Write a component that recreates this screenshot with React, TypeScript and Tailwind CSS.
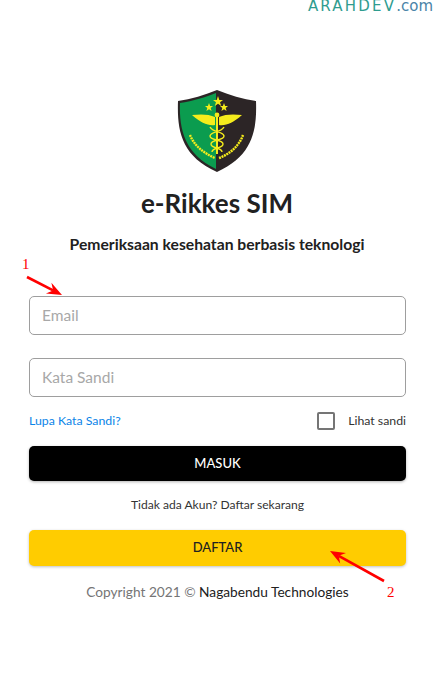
import React from 'react';

const font = { fontFamily: 'Lato, "Noto Sans", sans-serif' };

const Logo = () => (
  <svg width="80" height="82" viewBox="0 0 80 82" className="block">
    <path d="M1 11 C14 9 28 5 40 0 C52 5 66 9 79 11 C80 40 76 66 40 82 C4 66 0 40 1 11 Z" fill="#2c2526" />
    <path d="M3 13 C16 11 29 7 39 3 L39 79 C8 64 2 40 3 13 Z" fill="#0b9c4f" />
    <polygon points="41,6 42.3,10 46,10 43,12.3 44.2,16 41,13.7 37.8,16 39,12.3 36,10 39.7,10" fill="#f5ec1c" />
    <polygon points="32,13 33.1,16 36,16 33.7,18 34.6,21 32,19.2 29.4,21 30.3,18 28,16 30.9,16" fill="#f5ec1c" />
    <polygon points="47,13 48.1,16 51,16 48.7,18 49.6,21 47,19.2 44.4,21 45.3,18 43,16 45.9,16" fill="#f5ec1c" />
    <path d="M15 25 C23 24 32 24 38 27 L38 35 C31 36 24 33 15 25 Z" fill="#f5ec1c" />
    <path d="M65 25 C57 24 48 24 42 27 L42 35 C49 36 56 33 65 25 Z" fill="#f5ec1c" />
    <circle cx="40" cy="25" r="2.4" fill="#f5ec1c" />
    <rect x="39" y="26" width="2" height="38" fill="#f5ec1c" />
    <path d="M33 37 C36 43 46 41 47 46 C47 51 34 49 34 54 C34 59 45 57 45 62 M47 37 C44 43 34 41 33 46 C33 51 46 49 46 54 C46 59 35 57 35 62" fill="none" stroke="#f5ec1c" strokeWidth="1.4" />
    <path d="M13 45 C17 55 26 63 38 68" fill="none" stroke="#f5ec1c" strokeWidth="2.4" strokeDasharray="2 0.7" />
    <path d="M42 68 C53 64 62 56 66 45" fill="none" stroke="#f5ec1c" strokeWidth="2.4" strokeDasharray="2 0.7" />
  </svg>
);

const Arrow = ({ x1, y1, x2, y2 }: { x1: number; y1: number; x2: number; y2: number }) => {
  const a = Math.atan2(y2 - y1, x2 - x1);
  const p = (d: number, o: number) =>
    `${x2 - d * Math.cos(a) - o * Math.sin(a)},${y2 - d * Math.sin(a) + o * Math.cos(a)}`;
  return (
    <>
      <line x1={x1} y1={y1} x2={x2 - 10 * Math.cos(a)} y2={y2 - 10 * Math.sin(a)} stroke="#f00" strokeWidth="2.6" />
      <polygon points={`${x2},${y2} ${p(15, 6)} ${p(10, 0)} ${p(15, -6)}`} fill="#f00" />
    </>
  );
};

export default function App() {
  return (
    <div className="relative w-[434px] h-[699px] bg-white overflow-hidden" style={font}>
      <div
        className="flex justify-end pr-[1px] h-[14px] leading-[13px] text-[15px] tracking-[2.2px] text-[#2f9c8f] whitespace-nowrap"
        style={{ fontFamily: '"DejaVu Sans", sans-serif' }}
      >
        ARAHDEV<span className="text-[#4a84a8] tracking-[0px]">.com</span>
      </div>

      <div className="flex flex-col items-center pt-[76px]">
        <Logo />
        <h1 className="mt-[13px] text-[26px] leading-[36px] font-bold text-[#212121]">e-Rikkes SIM</h1>
        <p className="mt-[13px] text-[15.7px] leading-[20px] font-bold text-[#212121]">Pemeriksaan kesehatan berbasis teknologi</p>
      </div>

      <form className="px-[29px] w-[435px] mt-[42px]">
        <input
          placeholder="Email"
          className="block w-full h-[39px] px-[12px] pb-[2px] rounded-[5px] border border-[#9e9e9e] text-[15.5px] placeholder:text-[#a8a8a8] bg-white"
        />
        <input
          placeholder="Kata Sandi"
          className="block w-full h-[39px] mt-[23px] px-[12px] pb-[2px] rounded-[5px] border border-[#9e9e9e] text-[15.5px] placeholder:text-[#a8a8a8] bg-white"
        />
        <div className="flex items-center justify-between mt-[14px] h-[20px]">
          <a className="text-[12.3px] text-[#0a84e8]">Lupa Kata Sandi?</a>
          <label className="flex items-center gap-[13px] text-[12.3px] text-[#333]">
            <span className="block w-[18px] h-[18px] rounded-[2px] border-2 border-[#757575]" />
            Lihat sandi
          </label>
        </div>
        <button
          type="button"
          className="block w-full h-[35px] mt-[15px] rounded-[5px] bg-black text-white text-[13px] font-medium shadow-[0_1px_3px_rgba(0,0,0,0.3)]"
        >
          MASUK
        </button>
        <p className="mt-[16px] text-center text-[12.1px] leading-[16px] text-[#333]">Tidak ada Akun? Daftar sekarang</p>
        <button
          type="button"
          className="block w-full h-[36px] mt-[17px] rounded-[5px] bg-[#ffcc00] text-[#212121] text-[13px] font-medium shadow-[0_1px_3px_rgba(0,0,0,0.25)]"
        >
          DAFTAR
        </button>
        <p className="mt-[17px] text-center text-[13.7px] leading-[18px] text-[#757575]">
          Copyright 2021 © <span className="text-[#212121]">Nagabendu Technologies</span>
        </p>
      </form>

      {/* red annotations on top of the screenshot */}
      <svg className="absolute inset-0 pointer-events-none" width="434" height="699">
        <Arrow x1={27} y1={277} x2={62} y2={295} />
        <Arrow x1={384} y1={581} x2={330} y2={551} />
      </svg>
      <span className="absolute left-[22px] top-[256px] text-[15px] leading-[16px] text-[#f00]" style={{ fontFamily: '"Liberation Serif", serif' }}>1</span>
      <span className="absolute left-[387px] top-[584px] text-[15px] leading-[16px] text-[#f00]" style={{ fontFamily: '"Liberation Serif", serif' }}>2</span>
    </div>
  );
}
